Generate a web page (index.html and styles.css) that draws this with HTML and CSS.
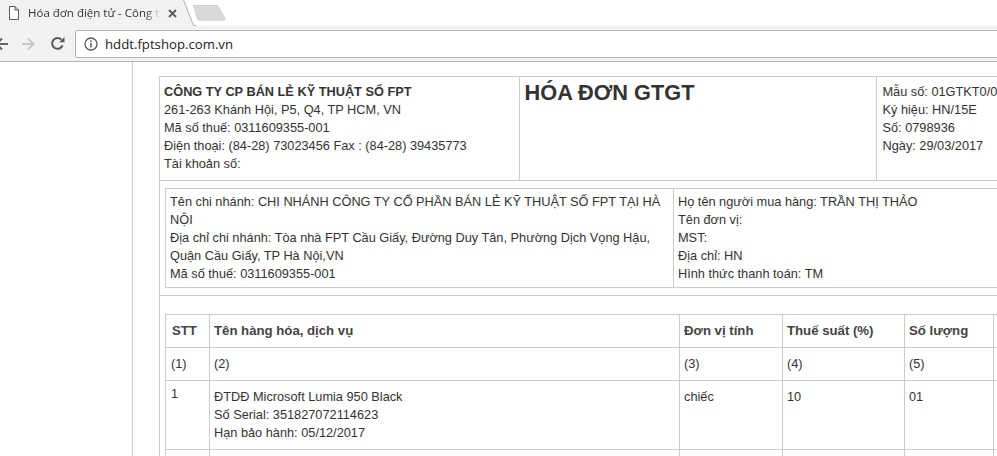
FILE: index.html
```
<!DOCTYPE html>
<html lang="vi">
<head>
<meta charset="utf-8">
<title>Hóa đơn điện tử</title>
<link rel="stylesheet" href="styles.css">
</head>
<body>
<header class="browser">
  <div class="tabstrip">
    <div class="tab">
      <svg class="tab-icon" width="12" height="14" viewBox="0 0 12 14"><path d="M1.5 .5h5.5l3.5 3.5v9.5h-9zM7 .5v3.5h3.5" fill="#fff" stroke="#5a5a5a"/></svg>
      <span class="tab-title">Hóa đơn điện tử - Công ty CP</span>
      <svg class="tab-close" width="9" height="9" viewBox="0 0 9 9"><path d="M1 1l7 7M8 1l-7 7" stroke="#5f5f5f" stroke-width="2"/></svg>
    </div>
    <svg class="tab-edge" width="13" height="26" viewBox="0 0 13 26"><path d="M0 0h1l10 25h2v1H0z" fill="#f2f2f2"/><path d="M.5 0l10 25.5h2.500" fill="none" stroke="#b0b0b0"/></svg>
    <svg class="newtab" width="34" height="17" viewBox="0 0 34 17"><path d="M1.500 1.500h24l7.500 13q.3 1.500-1 1.500H7q-1 0-1.500-1z" fill="#d8d8d8" stroke="#cfcfcf"/></svg>
    <div class="strip-rest"></div>
  </div>
  <div class="toolbar">
    <svg class="back" width="14" height="14" viewBox="0 0 14 14"><path d="M14 7H3M8 1.500 2.500 7 8 12.500" fill="none" stroke="#5f6368" stroke-width="2"/></svg>
    <svg class="forward" width="14" height="14" viewBox="0 0 14 14"><path d="M0 7h11M6 1.500 11.500 7 6 12.500" fill="none" stroke="#c8c8c8" stroke-width="2"/></svg>
    <svg class="reload" width="15" height="15" viewBox="0 0 15 15"><path d="M12.600 9.300A5.400 5.400 0 1 1 11.400 3.600" fill="none" stroke="#5a5a5a" stroke-width="2"/><path d="M9.200 6.200H14.500V.9z" fill="#5a5a5a"/></svg>
    <div class="omnibox">
      <svg width="14" height="14" viewBox="0 0 14 14"><circle cx="7" cy="7" r="6" fill="none" stroke="#5a5a5a" stroke-width="1.300"/><path d="M7 6v4.500M7 3.200v1.600" stroke="#5a5a5a" stroke-width="1.500"/></svg>
      <span class="url">hddt.fptshop.com.vn</span>
    </div>
  </div>
</header>
<main class="page">
  <div class="invoice">
    <table class="head-table">
      <colgroup><col class="c-seller"><col class="c-title"><col></colgroup>
      <tr>
        <td class="seller-cell">
          <strong class="seller">CÔNG TY CP BÁN LẺ KỸ THUẬT SỐ FPT</strong><br>
          261-263 Khánh Hội, P5, Q4, TP HCM, VN<br>
          Mã số thuế: 0311609355-001<br>
          Điện thoại: (84-28) 73023456 Fax : (84-28) 39435773<br>
          Tài khoản số:
        </td>
        <td class="title-cell"><h1 class="doc-title">HÓA ĐƠN GTGT</h1></td>
        <td class="doc-meta">
          Mẫu số: 01GTKT0/001<br>
          Ký hiệu: HN/15E<br>
          Số: 0798936<br>
          Ngày: 29/03/2017
        </td>
      </tr>
    </table>
    <section class="party-row">
      <table class="party-table">
        <colgroup><col class="c-branch"><col></colgroup>
        <tr>
          <td>
            Tên chi nhánh: CHI NHÁNH CÔNG TY CỔ PHẦN BÁN LẺ KỸ THUẬT SỐ FPT TẠI HÀ NỘI<br>
            Địa chỉ chi nhánh: Tòa nhà FPT Cầu Giấy, Đường Duy Tân, Phường Dịch Vọng Hậu, Quận Cầu Giấy, TP Hà Nội,VN<br>
            Mã số thuế: 0311609355-001
          </td>
          <td>
            Họ tên người mua hàng: TRẦN THỊ THẢO<br>
            Tên đơn vị:<br>
            MST:<br>
            Địa chỉ: HN<br>
            Hình thức thanh toán: TM
          </td>
        </tr>
      </table>
    </section>
    <section class="items-row">
      <table class="items-table">
        <colgroup><col class="c-stt"><col class="c-name"><col class="c-unit"><col class="c-tax"><col class="c-qty"><col class="c-price"></colgroup>
        <thead>
          <tr><th>STT</th><th>Tên hàng hóa, dịch vụ</th><th>Đơn vị tính</th><th>Thuế suất (%)</th><th>Số lượng</th><th></th></tr>
        </thead>
        <tbody>
          <tr class="index-row"><td>(1)</td><td>(2)</td><td>(3)</td><td>(4)</td><td>(5)</td><td></td></tr>
          <tr class="item-row">
            <td class="stt-cell">1</td>
            <td>ĐTDĐ Microsoft Lumia 950 Black<br>Số Serial: 351827072114623<br>Hạn bảo hành: 05/12/2017</td>
            <td>chiếc</td><td>10</td><td>01</td><td></td>
          </tr>
          <tr class="spare-row"><td></td><td></td><td></td><td></td><td></td><td></td></tr>
        </tbody>
      </table>
    </section>
  </div>
</main>
</body>
</html>
```
FILE: styles.css
```
* { box-sizing: border-box; }
html, body { margin: 0; height: 100%; overflow: hidden; background: #fff; }
body { font: 12.750px/18px "Liberation Sans", Arial, sans-serif; color: #333; }

.browser { height: 62px; font-family: "Open Sans", sans-serif; }
.tabstrip { display: flex; height: 26px; align-items: flex-start; background: #fff; }
.tab { width: 183px; height: 26px; flex: none; display: flex; align-items: center; background: #f2f2f2; padding-left: 8px; }
.tab-icon { flex: none; }
.tab-title { width: 133px; margin-left: 8px; flex: none; white-space: nowrap; overflow: hidden; font-size: 11.500px; color: #333;
  -webkit-mask-image: linear-gradient(90deg, #000 88%, transparent 100%); mask-image: linear-gradient(90deg, #000 88%, transparent 100%); }
.tab-close { flex: none; margin-left: 7px; }
.tab-edge { flex: none; }
.newtab { flex: none; margin: 4px 0 0 -4px; }
.strip-rest { flex: 1; height: 26px; border-bottom: 1px solid #b4b4b4; margin-left: -30px; position: relative; z-index: -1; }

.toolbar { display: flex; align-items: center; height: 36px; background: #f2f2f2; border-bottom: 1px solid #b4b4b4; }
.back { flex: none; margin-left: -6px; }
.forward { flex: none; margin-left: 14px; }
.reload { flex: none; margin-left: 14px; }
.omnibox { flex: 1; margin: 0 -4px 0 10px; height: 28px; display: flex; align-items: center; gap: 7px; padding-left: 8px; background: #fff; border: 1px solid #b4b4b4; border-radius: 2px; }
.url { font-size: 13.200px; color: #222; }

.page { height: 394px; margin-left: 132px; padding: 14px 0 0 26px; border-left: 1px solid #ccc; overflow: hidden; }
.invoice { width: 1000px; border-left: 1px solid #ccc; border-top: 1px solid #ccc; }
table { border-collapse: collapse; table-layout: fixed; }

.head-table { width: 100%; }
.head-table td { height: 103px; padding: 4px; vertical-align: top; border-bottom: 1px solid #ccc; border-right: 1px solid #ccc; }
.head-table .seller-cell { padding-top: 6px; }
.head-table .title-cell { padding-left: 5px; }
.c-seller { width: 359px; }
.c-title { width: 357px; }
.seller { font-weight: bold; }
.doc-title { margin: 0; font-size: 21.750px; line-height: 23px; font-weight: bold; }
.head-table .doc-meta { padding: 6px 0 0 6px; white-space: nowrap; }

.party-row { padding: 7px 0 7px 5px; border-bottom: 1px solid #ccc; }
.party-table { width: 1100px; }
.party-table td { padding: 4px; vertical-align: top; border: 1px solid #ccc; }
.c-branch { width: 508px; }

.items-row { padding: 18px 0 0 5px; }
.items-table { width: 1100px; }
.items-table th, .items-table td { border: 1px solid #ccc; padding: 7px 4px; text-align: left; vertical-align: top; }
.items-table th:first-child { padding-left: 6px; }
.items-table td:first-child { padding-left: 5px; }
.items-table th { height: 33px; font-size: 13.200px; color: #444; }
.c-stt { width: 44px; }
.c-name { width: 470px; }
.c-unit { width: 103px; }
.c-tax { width: 122px; }
.c-qty { width: 89px; }
.index-row td { height: 33px; }
.item-row td { height: 69px; }
.spare-row td { height: 40px; }
.items-table .stt-cell { padding-top: 4px; }
```
